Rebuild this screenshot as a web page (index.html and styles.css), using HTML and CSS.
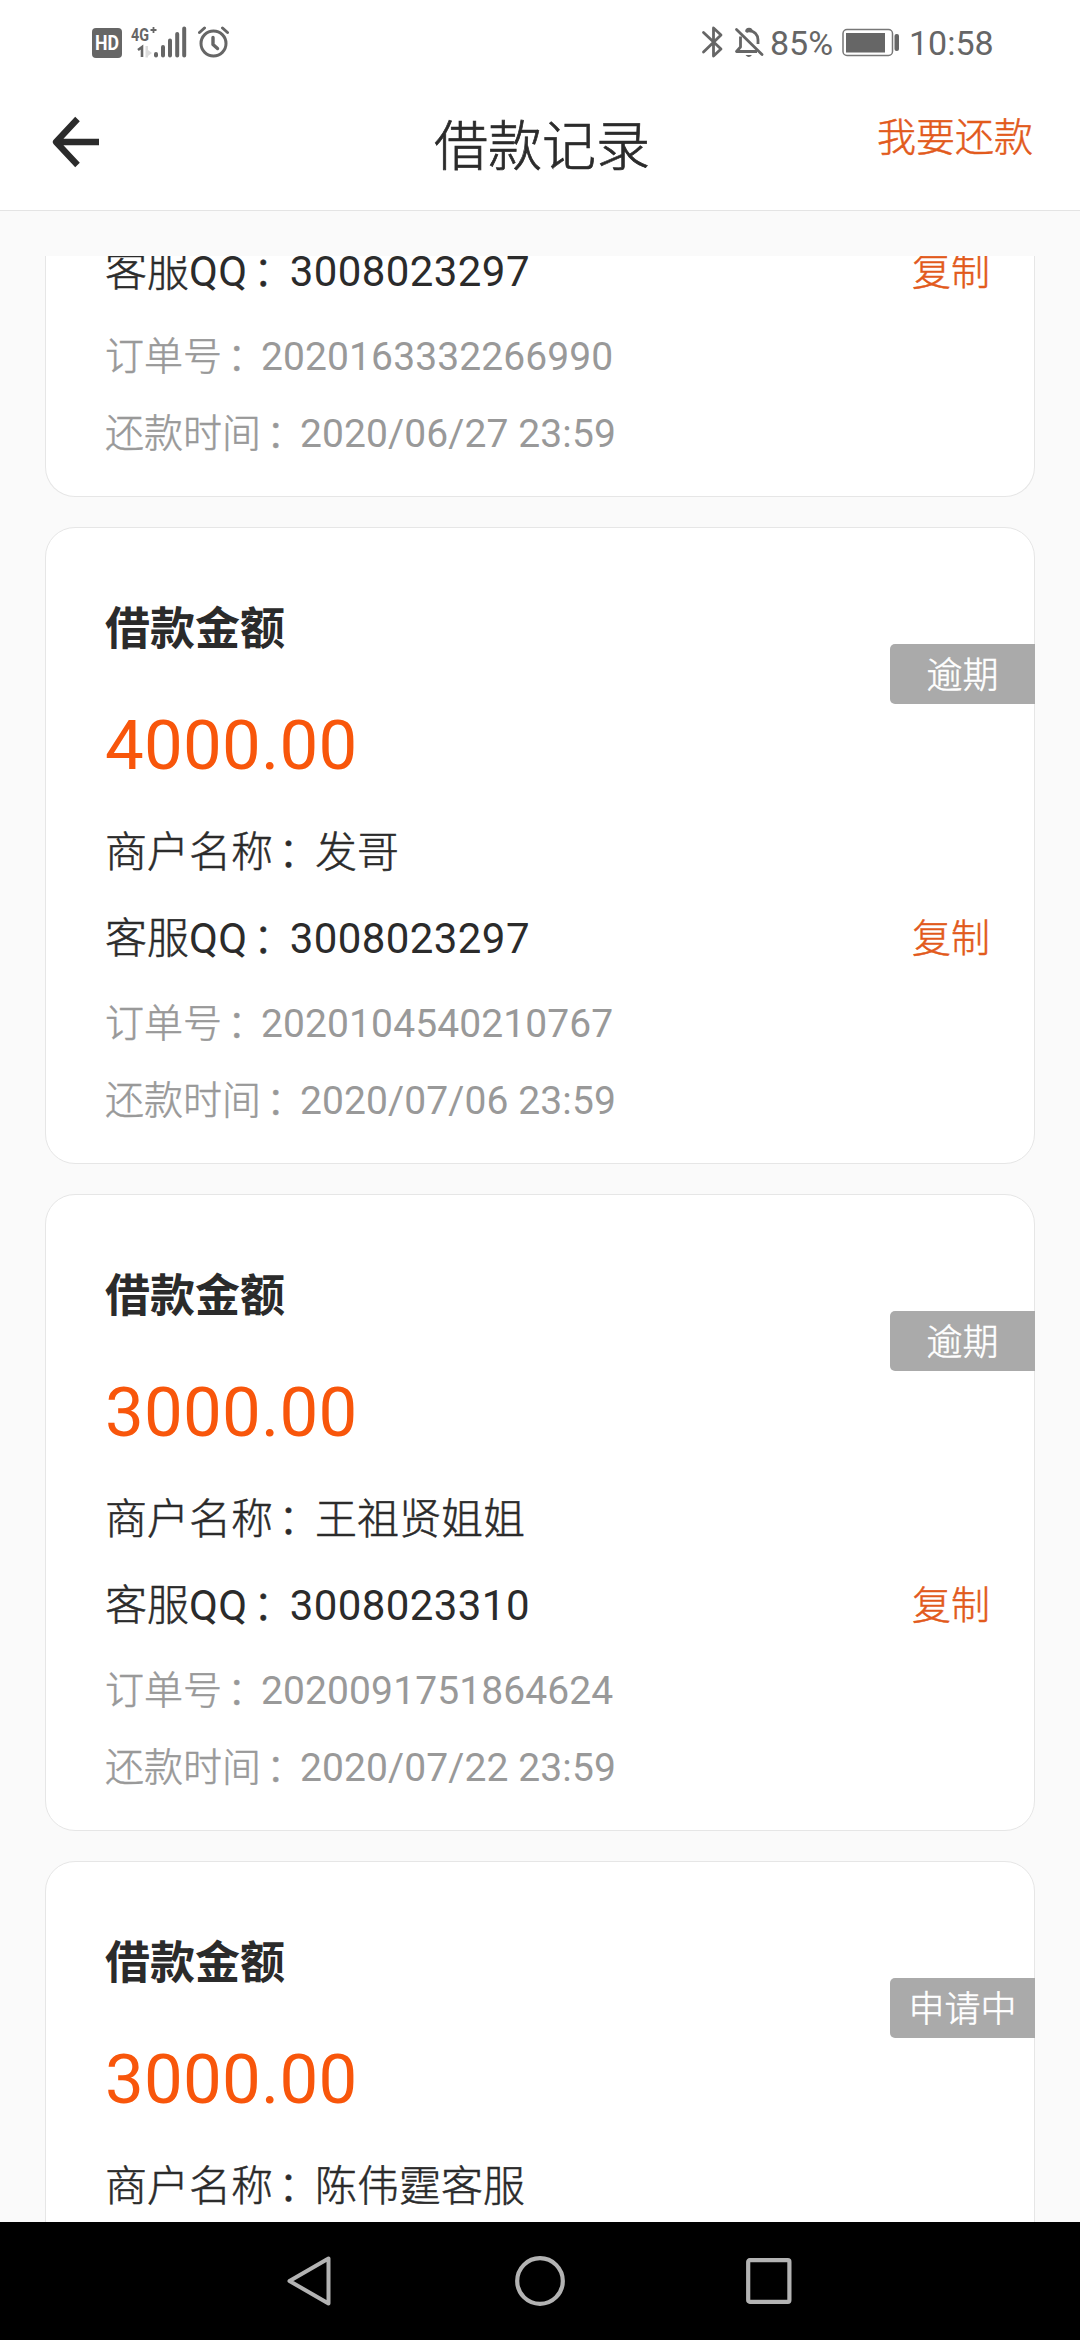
FILE: index.html
```html
<!DOCTYPE html>
<html lang="zh-CN">
<head>
    <meta charset="UTF-8">
    <meta name="viewport" content="width=device-width, initial-scale=1.0">
    <title>借款记录</title>
    <link rel="stylesheet" href="styles.css">
</head>
<body>

    <!-- 状态栏 -->
    <div class="status-bar">
        <svg class="icon-hd" width="30" height="32" viewBox="0 0 30 32">
            <rect x="0" y="2" width="30" height="30" rx="4" fill="#666"/>
            <text x="15" y="24" text-anchor="middle" textLength="24" lengthAdjust="spacingAndGlyphs" class="hd-text">HD</text>
        </svg>
        <svg class="icon-signal" width="58" height="32" viewBox="0 0 58 32">
            <text x="1" y="14.5" textLength="18" lengthAdjust="spacingAndGlyphs" class="net-text">4G</text>
            <path d="M23.5 1v6M20.5 4h6" stroke="#666" stroke-width="1.8"/>
            <path d="M8 24l4-3v10" fill="none" stroke="#666" stroke-width="2.6"/>
            <path d="M15.5 20h2.5v4l4 3-4 3v1.5h-2.5z" fill="#ddd"/>
            <path d="M26 28v1.5" stroke="#666" stroke-width="4" stroke-linecap="round"/>
            <path d="M33 21v8.5M40 14.5v15M47.2 8v21.5M54.2 2.5v27" stroke="#666" stroke-width="4" stroke-linecap="round"/>
        </svg>
        <svg class="icon-alarm" width="32" height="32" viewBox="0 0 32 32">
            <circle cx="15.5" cy="17.5" r="12.5" fill="none" stroke="#666" stroke-width="3"/>
            <path d="M15 11.5v7l4.5 4" fill="none" stroke="#666" stroke-width="3.4" stroke-linecap="round" stroke-linejoin="round"/>
            <path d="M1.5 6.5l5-4.5M24.5 2l5 4.5" stroke="#666" stroke-width="3" stroke-linecap="round"/>
        </svg>

        <svg class="icon-bluetooth" width="24" height="32" viewBox="0 0 24 32">
            <path d="M2.5 6.5L20 23l-7.5 7V2L20 9 2.5 26" fill="none" stroke="#666" stroke-width="2.8" stroke-linecap="round" stroke-linejoin="round"/>
        </svg>
        <svg class="icon-bell" width="32" height="32" viewBox="0 0 32 32">
            <path d="M3.5 3.5L29 28.5" stroke="#666" stroke-width="2.8" stroke-linecap="round"/>
            <path d="M7.5 10.5V21l-4 4.5H24M13 6c1-1 2-1.2 3-1.2 5.5 0 9 4 9 9V18" fill="none" stroke="#666" stroke-width="2.8" stroke-linejoin="round"/>
            <path d="M13.5 5.5a2.5 2.5 0 0 1 5 0" fill="none" stroke="#666" stroke-width="2.5"/>
            <path d="M12.5 29h6.5q-3.2 4-6.5 0z" fill="#666"/>
        </svg>
        <span class="battery-text">85%</span>
        <svg class="icon-battery" width="58" height="32" viewBox="0 0 58 32">
            <rect x="1" y="3.5" width="49.5" height="26" rx="4" fill="none" stroke="#777" stroke-width="1.5"/>
            <rect x="4" y="7" width="39" height="19.5" fill="#666"/>
            <rect x="52.5" y="8" width="4.5" height="17" rx="2" fill="#666"/>
        </svg>
        <span class="clock">10:58</span>
    </div>

    <!-- 标题栏 -->
    <div class="header">
        <a class="back" href="#" aria-label="返回">
            <svg width="50" height="54" viewBox="0 0 50 54">
                <path d="M26.5 4L5 27l21.500 23M6 27h42" fill="none" stroke="#2b2b2b" stroke-width="6.3" stroke-linejoin="round"/>
            </svg>
        </a>
        <h1>借款记录</h1>
        <a class="repay" href="#">我要还款</a>
    </div>

    <!-- 借款列表 -->
    <div class="list">
        <div class="card card-scrolled">
            <div class="row row-qq"><div>客服<span class="num">QQ</span><span class="colon">：</span><span class="num">3008023297</span></div><a class="copy" href="#">复制</a></div>
            <div class="row row-order">订单号<span class="colon">：</span><span class="num">2020163332266990</span></div>
            <div class="row row-time">还款时间<span class="colon">：</span><span class="num">2020/06/27 23:59</span></div>
        </div>

        <div class="card">
            <span class="badge">逾期</span>
            <h2>借款金额</h2>
            <div class="amount">4000.00</div>
            <div class="row row-name">商户名称<span class="colon">：</span>发哥</div>
            <div class="row row-qq"><div>客服<span class="num">QQ</span><span class="colon">：</span><span class="num">3008023297</span></div><a class="copy" href="#">复制</a></div>
            <div class="row row-order">订单号<span class="colon">：</span><span class="num">2020104540210767</span></div>
            <div class="row row-time">还款时间<span class="colon">：</span><span class="num">2020/07/06 23:59</span></div>
        </div>

        <div class="card">
            <span class="badge">逾期</span>
            <h2>借款金额</h2>
            <div class="amount">3000.00</div>
            <div class="row row-name">商户名称<span class="colon">：</span>王祖贤姐姐</div>
            <div class="row row-qq"><div>客服<span class="num">QQ</span><span class="colon">：</span><span class="num">3008023310</span></div><a class="copy" href="#">复制</a></div>
            <div class="row row-order">订单号<span class="colon">：</span><span class="num">2020091751864624</span></div>
            <div class="row row-time">还款时间<span class="colon">：</span><span class="num">2020/07/22 23:59</span></div>
        </div>

        <div class="card">
            <span class="badge">申请中</span>
            <h2>借款金额</h2>
            <div class="amount">3000.00</div>
            <div class="row row-name">商户名称<span class="colon">：</span>陈伟霆客服</div>
        </div>
    </div>

    <!-- 系统导航键 -->
    <div class="nav-bar">
        <div class="nav-key">
            <svg width="50" height="54" viewBox="0 0 50 54">
                <path d="M43.5 4.5v45L4.5 27z" fill="none" stroke="#b3b3b3" stroke-width="4" stroke-linejoin="round"/>
            </svg>
        </div>
        <div class="nav-key">
            <svg width="50" height="50" viewBox="0 0 50 50">
                <circle cx="25" cy="25" r="22.8" fill="none" stroke="#b3b3b3" stroke-width="4.2"/>
            </svg>
        </div>
        <div class="nav-key">
            <svg width="48" height="46" viewBox="0 0 48 46">
                <rect x="2.2" y="2.2" width="41.2" height="41.6" rx="1.5" fill="none" stroke="#b3b3b3" stroke-width="4.2"/>
            </svg>
        </div>
    </div>

</body>
</html>
```
FILE: styles.css
```css
* {
    box-sizing: border-box;
}

body {
    margin: 0;
    width: 1080px;
    height: 2340px;
    display: flex;
    flex-direction: column;
    overflow: hidden;
    background-color: #fafafa;
    color: #2b2b2b;
    font-family: Roboto, "Noto Sans CJK SC", sans-serif;
    font-weight: 300; /* 中文用细体，再略微加粗 */
    -webkit-text-stroke: 0.5px;
}

a {
    color: #e25a1c;
    text-decoration: none;
}

h1, h2 {
    margin: 0;
}

svg {
    display: block;
    flex: none;
}

/* 状态栏 */
.status-bar {
    height: 84px;
    padding: 0 86px 0 92px;
    display: flex;
    align-items: center;
    background-color: #fff;
    color: #666;
    font-size: 34px;
    font-weight: 400;
    line-height: 40px;
    -webkit-text-stroke: 0;
}

.hd-text {
    font-size: 20px;
    font-weight: bold;
    fill: #fff;
}

.net-text {
    font-size: 18px;
    font-weight: bold;
    fill: #666;
}

.icon-signal {
    margin-left: 8px;
}

.icon-alarm {
    margin-left: 10px;
}

.icon-bluetooth {
    margin-left: auto;
}

.icon-bell {
    margin-left: 8px;
}

.battery-text {
    width: 72px;
    margin-left: 5px;
    padding-top: 2px;
}

.clock {
    width: 85px;
    margin-left: 9px;
    padding-top: 2px;
}

/* 标题栏 */
.header {
    height: 127px;
    padding: 0 47px 10px 51px;
    display: grid;
    grid-template-columns: 1fr auto 1fr;
    align-items: center;
    background-color: #fff;
    border-bottom: 1px solid #e4e4e4;
}

.header h1 {
    font-size: 54px;
    font-weight: 300;
    line-height: 70px;
    padding-top: 11px;
    -webkit-text-stroke: 0.7px;
}

.repay {
    justify-self: end;
    font-size: 39px;
    line-height: 50px;
    margin-top: -9px;
}

/* 列表区域，超出部分裁掉 */
.list {
    flex: 1;
    min-height: 0;
    margin-top: 45px;
    padding: 0 45px;
    display: flex;
    flex-direction: column;
    gap: 30px;
    overflow: hidden;
}

.card {
    position: relative;
    flex: none;
    height: 637px;
    padding: 72px 44px 36px 59px;
    background-color: #fff;
    border: 1px solid #e6e6e6;
    border-radius: 30px;
}

/* 已滚动到顶部以外的卡片 */
.card-scrolled {
    height: 241px;
    padding-top: 0;
    border-top: none;
    border-radius: 0 0 30px 30px;
}

.card h2 {
    font-size: 45px;
    font-weight: 700;
    line-height: 60px;
    -webkit-text-stroke: 0;
}

.amount {
    margin-top: 41px;
    font-size: 69px;
    font-weight: 400;
    line-height: 90px;
    letter-spacing: 0.25px;
    color: #f8560b;
    -webkit-text-stroke: 0;
}

.row {
    white-space: nowrap;
}

.row-name {
    margin-top: 32px;
    font-size: 42px;
    line-height: 60px;
}

.row-qq {
    display: flex;
    justify-content: space-between;
    margin-top: 26px;
    font-size: 42px;
    line-height: 60px;
}

.card-scrolled .row-qq {
    margin-top: -14px;
}

.num {
    font-weight: 400;
    letter-spacing: 0.1px;
    -webkit-text-stroke: 0;
}

.row-qq .num {
    letter-spacing: 0.42px;
}

/* 冒号在字格里稍微靠右 */
.colon {
    margin-left: 5px;
    letter-spacing: -5px;
}

.copy {
    font-size: 39px;
}

.row-order {
    margin-top: 30px;
    font-size: 39px;
    line-height: 50px;
    color: #999;
}

.row-time {
    margin-top: 27px;
    font-size: 39px;
    line-height: 50px;
    color: #999;
}

/* 状态标签 */
.badge {
    position: absolute;
    top: 116px;
    right: -1px;
    width: 145px;
    height: 60px;
    padding-top: 2px;
    background-color: #aaa;
    border-radius: 5px 0 0 5px;
    color: #fff;
    font-size: 36px;
    line-height: 60px;
    text-align: center;
}

/* 导航键 */
.nav-bar {
    height: 118px;
    display: flex;
    justify-content: center;
    background-color: #000;
}

.nav-key {
    width: 230px;
    display: flex;
    align-items: center;
    justify-content: center;
}
```
